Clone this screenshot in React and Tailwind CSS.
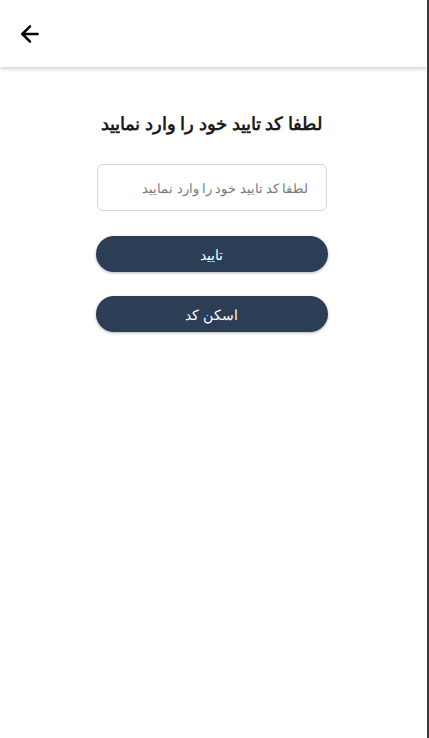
import { ArrowLeft } from 'lucide-react';

const font = { fontFamily: '"Noto Sans", "Liberation Sans", sans-serif' };

const App = () => {
  return (
    <div className="relative flex h-[738px] w-full flex-col overflow-hidden border-r-2 border-[#3a3a3a] bg-white" style={font}>
      <header className="flex h-[67px] shrink-0 items-center bg-white px-[17px] shadow-[0_2px_4px_rgba(0,0,0,0.18)]">
        <button type="button" className="text-black" title="Back">
          <ArrowLeft size={26} strokeWidth={2.3} />
        </button>
      </header>

      <main dir="rtl" className="flex flex-col items-center pt-[41px] pr-[4px]">
        <h1 className="text-[18px] font-bold leading-[30px] text-[#1c1c1c]">لطفا کد تایید خود را وارد نمایید</h1>

        <input
          type="text"
          placeholder="لطفا کد تایید خود را وارد نمایید"
          className="mt-[26px] h-[47px] w-[230px] rounded-md border border-[#d6d6d6] bg-white px-[17px] text-[13px] text-gray-800 placeholder:text-[#7a7a7a] focus:outline-none"
        />

        <button
          type="button"
          className="mt-[25px] h-[36px] w-[232px] rounded-full bg-[#2c3e55] text-[14px] text-white shadow-[0_1px_3px_rgba(0,0,0,0.3)]"
        >
          تایید
        </button>
        <button
          type="button"
          className="mt-[24px] h-[36px] w-[232px] rounded-full bg-[#2c3e55] text-[14px] text-white shadow-[0_1px_3px_rgba(0,0,0,0.3)]"
        >
          اسکن کد
        </button>
      </main>
    </div>
  );
};

export default App;
